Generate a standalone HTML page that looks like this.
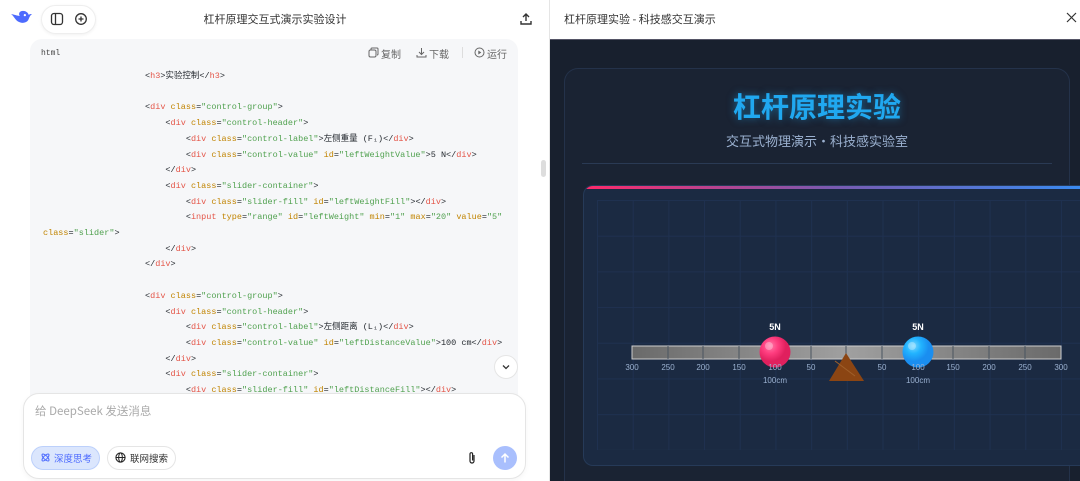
<!DOCTYPE html>
<html><head><meta charset="utf-8"><style>
*{margin:0;padding:0;box-sizing:border-box}
html{overflow:hidden;width:1080px;height:481px}
body{width:1080px;height:481px;overflow:hidden;background:#fff;font-family:"Liberation Sans","Noto Sans CJK SC",sans-serif;position:relative}
.a{position:absolute}
.code{font-family:"Liberation Mono","Noto Sans CJK SC",monospace;font-size:8.5px;color:#24292f;white-space:pre;line-height:12px}
.t{color:#e45649}.at{color:#c18401}.s{color:#50a14f}
.cn{font-family:"Noto Sans CJK SC",sans-serif}
</style></head><body>
<!-- left header -->
<svg class="a" style="left:10px;top:9px" width="23" height="19" viewBox="0 0 20 17"><path d="M0.5 4.5c2 1 3 4 6 6.5 3 2 7.5 2 9.5-1 1-2 1.2-4 3.5-5.5-1.2 0-2.2 0-3 .8C15.6 2.5 12.5 1 9.5 2c-2 1-2 3-1 4.2C6.5 6.2 3.5 5 .5 4.5z" fill="#4d6bfe"/><circle cx="13" cy="5.5" r="1" fill="#fff"/><path d="M5 11c2 2 5 3 8 2" stroke="#fff" stroke-width="1.2" fill="none"/></svg>
<div class="a" style="left:41px;top:5px;width:55px;height:29px;border:1px solid #eee;border-radius:15px;box-shadow:0 1px 3px rgba(0,0,0,.06)"></div>
<svg class="a" style="left:50px;top:12px" width="14" height="14" viewBox="0 0 14 14"><rect x="1.5" y="1.5" width="11" height="11" rx="2.5" fill="none" stroke="#333" stroke-width="1.3"/><line x1="5.5" y1="1.5" x2="5.5" y2="12.5" stroke="#333" stroke-width="1.3"/></svg>
<svg class="a" style="left:74px;top:12px" width="14" height="14" viewBox="0 0 14 14"><circle cx="7" cy="7" r="5.3" fill="none" stroke="#333" stroke-width="1.3"/><path d="M7 4.5v5M4.5 7h5" stroke="#333" stroke-width="1.3"/></svg>
<div class="a cn" style="left:0;width:550px;top:11px;text-align:center;font-size:11px;color:#333">杠杆原理交互式演示实验设计</div>
<svg class="a" style="left:519px;top:12px" width="14" height="14" viewBox="0 0 14 14"><path d="M7 9V2M4 5l3-3 3 3M2 9v3h10V9" fill="none" stroke="#333" stroke-width="1.4"/></svg>
<!-- code block -->
<div class="a" style="left:30px;top:39px;width:488px;height:370px;background:#f6f7f9;border-radius:12px"></div>
<div class="a" style="left:41px;top:49px;font-family:'Liberation Mono',monospace;font-size:8px;color:#444">html</div>
<svg class="a" style="left:368px;top:47px" width="11" height="11" viewBox="0 0 11 11"><rect x="1" y="3" width="7" height="7" rx="1.5" fill="none" stroke="#666"/><path d="M3 2.5V2a1 1 0 011-1h5a1 1 0 011 1v5a1 1 0 01-1 1" fill="none" stroke="#666"/></svg>
<div class="a cn" style="left:381px;top:46px;font-size:10px;color:#666">复制</div>
<svg class="a" style="left:416px;top:47px" width="11" height="11" viewBox="0 0 11 11"><path d="M5.5 1v6M3 5l2.5 2.5L8 5M1 8v2h9V8" fill="none" stroke="#666"/></svg>
<div class="a cn" style="left:429px;top:46px;font-size:10px;color:#666">下载</div>
<div class="a" style="left:462px;top:47px;width:1px;height:11px;background:#ddd"></div>
<svg class="a" style="left:474px;top:47px" width="11" height="11" viewBox="0 0 11 11"><circle cx="5.5" cy="5.5" r="4.5" fill="none" stroke="#666"/><path d="M4.3 3.5v4l3-2z" fill="#666"/></svg>
<div class="a cn" style="left:487px;top:46px;font-size:10px;color:#666">运行</div>
<div class="a code" style="left:43px;top:69px;line-height:15.7px">                    &lt;<span class="t">h3</span>&gt;实验控制&lt;/<span class="t">h3</span>&gt;

                    &lt;<span class="t">div</span> <span class="at">class</span>=<span class="s">"control-group"</span>&gt;
                        &lt;<span class="t">div</span> <span class="at">class</span>=<span class="s">"control-header"</span>&gt;
                            &lt;<span class="t">div</span> <span class="at">class</span>=<span class="s">"control-label"</span>&gt;左侧重量 (F₁)&lt;/<span class="t">div</span>&gt;
                            &lt;<span class="t">div</span> <span class="at">class</span>=<span class="s">"control-value"</span> <span class="at">id</span>=<span class="s">"leftWeightValue"</span>&gt;5 N&lt;/<span class="t">div</span>&gt;
                        &lt;/<span class="t">div</span>&gt;
                        &lt;<span class="t">div</span> <span class="at">class</span>=<span class="s">"slider-container"</span>&gt;
                            &lt;<span class="t">div</span> <span class="at">class</span>=<span class="s">"slider-fill"</span> <span class="at">id</span>=<span class="s">"leftWeightFill"</span>&gt;&lt;/<span class="t">div</span>&gt;
                            &lt;<span class="t">input</span> <span class="at">type</span>=<span class="s">"range"</span> <span class="at">id</span>=<span class="s">"leftWeight"</span> <span class="at">min</span>=<span class="s">"1"</span> <span class="at">max</span>=<span class="s">"20"</span> <span class="at">value</span>=<span class="s">"5"</span>
<span class="at">class</span>=<span class="s">"slider"</span>&gt;
                        &lt;/<span class="t">div</span>&gt;
                    &lt;/<span class="t">div</span>&gt;

                    &lt;<span class="t">div</span> <span class="at">class</span>=<span class="s">"control-group"</span>&gt;
                        &lt;<span class="t">div</span> <span class="at">class</span>=<span class="s">"control-header"</span>&gt;
                            &lt;<span class="t">div</span> <span class="at">class</span>=<span class="s">"control-label"</span>&gt;左侧距离 (L₁)&lt;/<span class="t">div</span>&gt;
                            &lt;<span class="t">div</span> <span class="at">class</span>=<span class="s">"control-value"</span> <span class="at">id</span>=<span class="s">"leftDistanceValue"</span>&gt;100 cm&lt;/<span class="t">div</span>&gt;
                        &lt;/<span class="t">div</span>&gt;
                        &lt;<span class="t">div</span> <span class="at">class</span>=<span class="s">"slider-container"</span>&gt;
                            &lt;<span class="t">div</span> <span class="at">class</span>=<span class="s">"slider-fill"</span> <span class="at">id</span>=<span class="s">"leftDistanceFill"</span>&gt;&lt;/<span class="t">div</span>&gt;</div>
<div class="a" style="left:494px;top:355px;width:24px;height:24px;border-radius:50%;background:#fff;border:1px solid #e5e5e5"></div>
<svg class="a" style="left:502px;top:364px" width="8" height="6" viewBox="0 0 8 6"><path d="M1 1.5l3 3 3-3" fill="none" stroke="#333" stroke-width="1.3"/></svg>
<div class="a" style="left:541px;top:160px;width:5px;height:17px;background:#ddd;border-radius:3px"></div>
<!-- input -->
<div class="a" style="left:23px;top:393px;width:503px;height:86px;background:#fff;border:1px solid #e5e5e5;border-radius:16px;box-shadow:0 2px 6px rgba(0,0,0,.04)"></div>
<div class="a cn" style="left:35px;top:403px;font-size:11.5px;color:#aaa">给 DeepSeek 发送消息</div>
<div class="a cn" style="left:31px;top:446px;width:69px;height:24px;border-radius:12px;background:#dbe6fd;border:1px solid #bcd0fb;color:#4d6bfe;font-size:9.5px;line-height:22px;padding-left:22px">深度思考</div>
<svg class="a" style="left:40px;top:452px" width="11" height="11" viewBox="0 0 12 12"><ellipse cx="6" cy="6" rx="5" ry="2" fill="none" stroke="#4d6bfe" stroke-width="1.1" transform="rotate(45 6 6)"/><ellipse cx="6" cy="6" rx="5" ry="2" fill="none" stroke="#4d6bfe" stroke-width="1.1" transform="rotate(-45 6 6)"/></svg>
<div class="a cn" style="left:107px;top:446px;width:69px;height:24px;border-radius:12px;background:#fff;border:1px solid #e5e5e5;color:#333;font-size:9.5px;line-height:22px;padding-left:22px">联网搜索</div>
<svg class="a" style="left:115px;top:452px" width="11" height="11" viewBox="0 0 12 12"><circle cx="6" cy="6" r="5" fill="none" stroke="#222" stroke-width="1.2"/><ellipse cx="6" cy="6" rx="2" ry="5" fill="none" stroke="#222" stroke-width="1.1"/><path d="M1 6h10" stroke="#222" stroke-width="1.1"/></svg>
<svg class="a" style="left:467px;top:451px" width="10" height="14" viewBox="0 0 10 14"><path d="M7 4v6a2 2 0 01-4 0V3a1.3 1.3 0 012.6 0v6.5" fill="none" stroke="#222" stroke-width="1.2"/></svg>
<div class="a" style="left:493px;top:446px;width:24px;height:24px;border-radius:50%;background:#a9bffd"></div>
<svg class="a" style="left:499px;top:452px" width="12" height="12" viewBox="0 0 12 12"><path d="M6 10.5V2M2.5 5.5L6 2l3.5 3.5" fill="none" stroke="#fff" stroke-width="1.5"/></svg>
<!-- divider -->
<div class="a" style="left:549px;top:0;width:1px;height:481px;background:#e5e5e5"></div>
<!-- right -->
<div class="a cn" style="left:564px;top:11px;font-size:11px;color:#333">杠杆原理实验 - 科技感交互演示</div>
<svg class="a" style="left:1066px;top:12px" width="11" height="11" viewBox="0 0 11 11"><path d="M1 1l9 9M10 1l-9 9" stroke="#333" stroke-width="1.2"/></svg>
<div class="a" style="left:550px;top:39px;width:530px;height:442px;background:#18202e;border-top:1px solid #556;overflow:hidden">
<div class="a" style="left:14px;top:28px;width:506px;height:413px;background:#1a2333;border:1px solid #24324a;border-bottom:none;border-radius:14px 14px 0 0"></div>
<div class="a cn" style="left:14px;top:46px;width:506px;text-align:center;font-size:28px;font-weight:bold;color:#20a8f0;text-shadow:0 0 8px rgba(32,168,240,.5)">杠杆原理实验</div>
<div class="a cn" style="left:14px;top:91px;width:506px;text-align:center;font-size:13px;color:#9bb1d0">交互式物理演示·科技感实验室</div>
<div class="a" style="left:32px;top:123px;width:470px;height:1px;background:#2a3a54"></div>
<div class="a" style="left:33px;top:145px;width:497px;height:281px;background:#1b2a42;border:1px solid #263a58;border-right:none;border-radius:10px 0 0 10px;overflow:hidden">
<div style="height:3px;background:linear-gradient(90deg,#ff2a6a,#7a5ab0,#3a8af0)"></div>
<div class="a" style="left:13px;top:14px;width:484px;height:250px;background-image:linear-gradient(#1f3150 1px,transparent 1px),linear-gradient(90deg,#1f3150 1px,transparent 1px);background-size:35.7px 35.7px"></div>
</div>
</div>
<svg class="a" style="left:580px;top:315px" width="500" height="80">
<defs><linearGradient id="b" x1="0" x2="1"><stop offset="0" stop-color="#6a6a6a"/><stop offset=".5" stop-color="#a0a0a0"/><stop offset="1" stop-color="#6a6a6a"/></linearGradient>
<radialGradient id="p" cx=".35" cy=".3"><stop offset="0" stop-color="#ff7aa8"/><stop offset=".5" stop-color="#ff3d7f"/><stop offset="1" stop-color="#e0205e"/></radialGradient>
<radialGradient id="q" cx=".35" cy=".3"><stop offset="0" stop-color="#7ad8ff"/><stop offset=".5" stop-color="#22b4ff"/><stop offset="1" stop-color="#1a8ef0"/></radialGradient></defs>
<rect x="52" y="31" width="429" height="13" fill="url(#b)" stroke="#ccc" stroke-width="1"/>
<g stroke="#4a5560" stroke-width="1"><path d="M88 31v13M123 31v13M159 31v13M195 31v13M231 31v13M266 31v13M302 31v13M338 31v13M373 31v13M409 31v13M445 31v13"/></g>
<path d="M266 38l-17 28h35z" fill="#8b4513"/><path d="M255 46l20 15" stroke="#a0602a" stroke-width="1"/>
<circle cx="195" cy="37" r="15.5" fill="url(#p)"/><circle cx="189" cy="31" r="4" fill="#fff" opacity=".3"/>
<circle cx="338" cy="37" r="15.5" fill="url(#q)"/><circle cx="332" cy="31" r="4" fill="#fff" opacity=".3"/>
<g fill="#fff" font-size="9" font-weight="bold" text-anchor="middle" font-family="Liberation Sans"><text x="195" y="15">5N</text><text x="338" y="15">5N</text></g>
<g fill="#9bb1d0" font-size="8" text-anchor="middle" font-family="Liberation Sans"><text x="52" y="55">300</text><text x="88" y="55">250</text><text x="123" y="55">200</text><text x="159" y="55">150</text><text x="195" y="55">100</text><text x="231" y="55">50</text><text x="302" y="55">50</text><text x="338" y="55">100</text><text x="373" y="55">150</text><text x="409" y="55">200</text><text x="445" y="55">250</text><text x="481" y="55">300</text><text x="195" y="68">100cm</text><text x="338" y="68">100cm</text></g>
</svg>
</body></html>
